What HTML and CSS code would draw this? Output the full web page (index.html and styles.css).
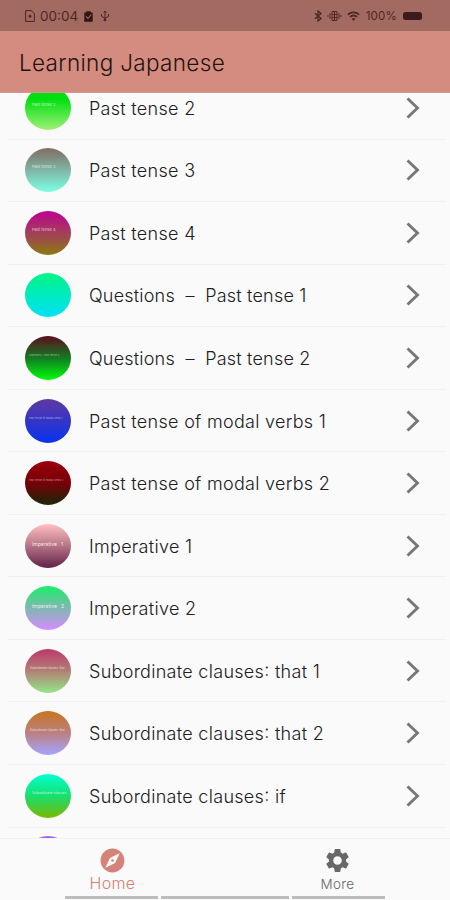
FILE: index.html
```html
<!DOCTYPE html>
<html lang="en">
<head>
<meta charset="utf-8">
<title>Learning Japanese</title>
<link rel="stylesheet" href="styles.css">
</head>
<body>
<div class="status">
  <div class="status-left">
    <svg width="10" height="12" viewBox="0 0 10 12" fill="none" stroke="currentColor"><path d="M.6.6h5.6L9.4 3.5v7.9H.6z"/><path d="M3.500 6.300h3M5 4.800v3" stroke-width="1.500"/></svg>
    <span class="clock">00:04</span>
    <svg class="task" width="9" height="11" viewBox="0 0 9 11"><path d="M.3 1.5h2V.3h4.4v1.2h2v9.2H.3z" fill="currentColor"/><path d="M2 5.500l2 2 3.200-4" fill="none" stroke="#a36a61" stroke-width="1.100"/></svg>
    <svg class="usb" width="10" height="12" viewBox="0 0 10 12" fill="none" stroke="currentColor" stroke-width="1"><path d="M5 1v9M1.500 4v2.200L5 8.300l3.500-2V4M3.600 2.700L5 1l1.400 1.700"/><circle cx="5" cy="10" r="1" fill="currentColor"/></svg>
  </div>
  <div class="status-right">
    <svg width="8" height="12" viewBox="0 0 8 12" fill="none" stroke="currentColor" stroke-width="1.300"><path d="M1 3.200l6 5.300-3 2.600V.9l3 2.600-6 5.300"/></svg>
    <svg class="vibrate" width="15" height="12" viewBox="0 0 15 12" fill="none" stroke="currentColor"><path d="M5 1.500h5v9H5zM3 3v6M12 3v6M1 5v2M14 5v2M7.500 1.500v9M5 4.500h5M5 7.500h5"/></svg>
    <svg class="wifi" width="13" height="11" viewBox="0 0 13 11" fill="none" stroke="currentColor" stroke-width="1.800"><path d="M.8 3.600q5.700-4.400 11.400 0M2.900 5.900q3.600-2.800 7.200 0"/><path d="M4.600 7.600q1.900-1.300 3.800 0L6.500 10z" fill="currentColor" stroke="none"/></svg>
    <span class="percent">100%</span>
    <span class="battery"></span>
  </div>
</div>
<header class="appbar"><h1>Learning Japanese</h1></header>
<main class="list">
  <div class="row"><span class="dot d1">Past tense 2</span><span class="name">Past tense 2</span><svg class="chev" viewBox="0 0 14 22"><path d="M1.500 1.500L11.500 11l-10 9.500"/></svg></div>
  <div class="row"><span class="dot d2">Past tense 3</span><span class="name">Past tense 3</span><svg class="chev" viewBox="0 0 14 22"><path d="M1.500 1.500L11.500 11l-10 9.500"/></svg></div>
  <div class="row"><span class="dot d3">Past tense 4</span><span class="name">Past tense 4</span><svg class="chev" viewBox="0 0 14 22"><path d="M1.500 1.500L11.500 11l-10 9.500"/></svg></div>
  <div class="row"><span class="dot d4"></span><span class="name dash">Questions&nbsp; –&nbsp; Past tense 1</span><svg class="chev" viewBox="0 0 14 22"><path d="M1.500 1.500L11.500 11l-10 9.500"/></svg></div>
  <div class="row"><span class="dot long d5">Questions – Past tense 2</span><span class="name dash">Questions&nbsp; –&nbsp; Past tense 2</span><svg class="chev" viewBox="0 0 14 22"><path d="M1.500 1.500L11.500 11l-10 9.500"/></svg></div>
  <div class="row"><span class="dot long d6">Past tense of modal verbs 1</span><span class="name">Past tense of modal verbs 1</span><svg class="chev" viewBox="0 0 14 22"><path d="M1.500 1.500L11.500 11l-10 9.500"/></svg></div>
  <div class="row"><span class="dot long d7">Past tense of modal verbs 2</span><span class="name">Past tense of modal verbs 2</span><svg class="chev" viewBox="0 0 14 22"><path d="M1.500 1.500L11.500 11l-10 9.500"/></svg></div>
  <div class="row"><span class="dot big d8">Imperative &nbsp; 1</span><span class="name">Imperative 1</span><svg class="chev" viewBox="0 0 14 22"><path d="M1.500 1.500L11.500 11l-10 9.500"/></svg></div>
  <div class="row"><span class="dot big d9">Imperative &nbsp; 2</span><span class="name">Imperative 2</span><svg class="chev" viewBox="0 0 14 22"><path d="M1.500 1.500L11.500 11l-10 9.500"/></svg></div>
  <div class="row"><span class="dot sub d10">Subordinate clauses: that</span><span class="name">Subordinate clauses<span class="colon">:</span> that 1</span><svg class="chev" viewBox="0 0 14 22"><path d="M1.500 1.500L11.500 11l-10 9.500"/></svg></div>
  <div class="row"><span class="dot sub d11">Subordinate clauses: that</span><span class="name">Subordinate clauses<span class="colon">:</span> that 2</span><svg class="chev" viewBox="0 0 14 22"><path d="M1.500 1.500L11.500 11l-10 9.500"/></svg></div>
  <div class="row"><span class="dot sub wide d12">Subordinate clauses</span><span class="name">Subordinate clauses<span class="colon">:</span> if</span><svg class="chev" viewBox="0 0 14 22"><path d="M1.500 1.500L11.500 11l-10 9.500"/></svg></div>
  <div class="row"><span class="dot d13"></span></div>
</main>
<nav class="tabs">
  <div class="tab active">
    <svg viewBox="1.500 1.500 21 21"><path fill="currentColor" fill-rule="evenodd" d="M12 10.900c-.610 0-1.100.490-1.100 1.100s.490 1.100 1.100 1.100c.610 0 1.100-.490 1.100-1.100s-.490-1.100-1.100-1.100zM12 2C6.480 2 2 6.480 2 12s4.480 10 10 10 10-4.480 10-10S17.520 2 12 2zm2.190 12.190L6 18l3.810-8.190L18 6l-3.810 8.190z"/></svg>
    <span>Home</span>
  </div>
  <div class="tab">
    <svg viewBox="1.500 1.500 21 21"><path fill="currentColor" d="M19.140 12.940c.040-.300.060-.610.060-.940 0-.320-.020-.640-.070-.940l2.030-1.580c.180-.140.230-.410.120-.610l-1.920-3.320c-.120-.220-.370-.290-.590-.220l-2.390.960c-.500-.380-1.030-.700-1.620-.940l-.360-2.540c-.040-.240-.240-.410-.480-.410h-3.840c-.240 0-.430.170-.470.410l-.360 2.540c-.590.240-1.130.570-1.620.940l-2.390-.960c-.220-.080-.470 0-.590.220L2.740 8.870c-.120.210-.080.470.120.610l2.030 1.580c-.050.300-.090.630-.090.940s.020.640.070.940l-2.030 1.580c-.180.140-.230.410-.120.610l1.920 3.320c.120.220.370.290.590.220l2.390-.960c.500.380 1.030.700 1.620.940l.360 2.540c.050.240.240.410.480.410h3.840c.240 0 .440-.170.470-.410l.360-2.540c.590-.240 1.130-.560 1.620-.940l2.390.960c.220.080.470 0 .590-.220l1.920-3.320c.120-.220.070-.470-.120-.610l-2.010-1.580zM12 15.600c-1.980 0-3.600-1.620-3.600-3.600s1.620-3.600 3.600-3.600 3.600 1.620 3.600 3.600-1.620 3.600-3.600 3.600z"/></svg>
    <span>More</span>
  </div>
</nav>
<div class="gesture"><i></i><i class="mid"></i><i></i></div>
</body>
</html>
```
FILE: styles.css
```css
* { box-sizing: border-box; }

body {
  margin: 0;
  width: 450px;
  height: 900px;
  overflow: hidden;
  display: flex;
  flex-direction: column;
  background: #fafafa;
  font-family: Inter, "Liberation Sans", sans-serif;
  font-weight: 300;
}

svg { display: block; flex: none; }

.status {
  flex: none;
  height: 31px;
  padding: 1px 28px 0 25px;
  display: flex;
  align-items: center;
  justify-content: space-between;
  background: #a36a61;
  color: #4a2823;
}

.status-left, .status-right { display: flex; align-items: center; }
.clock { margin-left: 5px; font-size: 13.500px; font-weight: 400; letter-spacing: 0; }
.task { margin-left: 6px; color: #301512; }
.usb { margin-left: 7px; }
.vibrate { margin-left: 5px; }
.wifi { margin-left: 5px; }
.percent { margin-left: 6px; font-size: 11.500px; font-weight: 400; letter-spacing: .2px; }
.battery { margin-left: 6px; width: 19px; height: 8px; border-radius: 2.500px; background: #3a1d1b; }

.appbar {
  flex: none;
  height: 62px;
  padding: 2px 19px 0;
  display: flex;
  align-items: center;
  background: #d58c80;
  border-bottom: 1px solid #d8978c;
}

.appbar h1 {
  margin: 0;
  font-size: 22.500px;
  font-weight: 300;
  letter-spacing: .33px;
  color: #231311;
}

.list {
  flex: none;
  height: 745px;
  padding: 0 4px 0 8px;
  overflow: hidden;
}

.row {
  height: 62.550px;
  padding: 0 26px 0 17px;
  display: flex;
  align-items: center;
  border-bottom: 1px solid #f1f1f1;
}

.row:first-child { margin-top: -16px; }

.dot {
  flex: none;
  width: 46px;
  height: 44px;
  padding: 16px 0 0 7px;
  border-radius: 50%;
  overflow: hidden;
  white-space: pre;
  font-size: 4px;
  line-height: 6px;
  font-weight: 400;
  color: rgba(255, 255, 255, .7);
}

.long { padding-left: 4px; font-size: 2.600px; color: rgba(255, 255, 255, .55); }
.big { padding-top: 17px; font-size: 5px; color: rgba(255, 255, 255, .85); }
.sub { padding: 16px 0 0 5px; font-size: 2.900px; }
.wide { padding-left: 7px; font-size: 3.600px; }

.d1 { background: linear-gradient(#00e010 30%, #a0f078); }
.d2 { background: linear-gradient(#806c64, #80b5a4 50%, #7cffe5); }
.d3 { background: linear-gradient(#bd0091, #a33f5a 50%, #8a7a10); }
.d4 { background: linear-gradient(#00f584, #00e0f8); }
.d5 { background: linear-gradient(#5c0c1c, #147a24 50%, #00fc08); }
.d6 { background: linear-gradient(#6038a0, #0832f0); }
.d7 { background: linear-gradient(#980008, #780008 50%, #182808); }
.d8 { background: linear-gradient(#ffc0c0, #b67486 50%, #602048); }
.d9 { background: linear-gradient(#18ef68, #80b8b0 50%, #d48cff); }
.d10 { background: linear-gradient(#bd386c, #b08076 50%, #94e888); }
.d11 { background: linear-gradient(#c87420, #bc8080 50%, #a4a4ff); }
.d12 { background: linear-gradient(#00ffd0, #18df70 50%, #78b800); }
.d13 { background: #a464e0; }

.name {
  flex: 1;
  margin-left: 18px;
  padding-top: 1px;
  white-space: nowrap;
  font-size: 18px;
  letter-spacing: .29px;
  color: #202020;
}

.dash { letter-spacing: .2px; }
.colon { font-feature-settings: "case"; }

.chev {
  width: 14px;
  height: 22px;
  fill: none;
  stroke: #777;
  stroke-width: 2.900;
}

.tabs {
  flex: none;
  height: 57px;
  padding-top: 9px;
  display: flex;
  border-top: 1px solid #f2f2f2;
}

.tab {
  flex: 1;
  display: flex;
  flex-direction: column;
  align-items: center;
  color: #686868;
  font-size: 13.500px;
  line-height: 20px;
  letter-spacing: .3px;
}

.tab svg { width: 25px; height: 25px; }
.tab span { margin-top: 1px; }
.active { color: #d58278; font-size: 16px; }
.active span { margin-top: 0; }

.gesture { flex: none; display: flex; justify-content: center; gap: 3px; padding-top: 1px; }
.gesture i { width: 93px; height: 3px; background: #bdbdbd; }
.gesture .mid { width: 128px; }
```
